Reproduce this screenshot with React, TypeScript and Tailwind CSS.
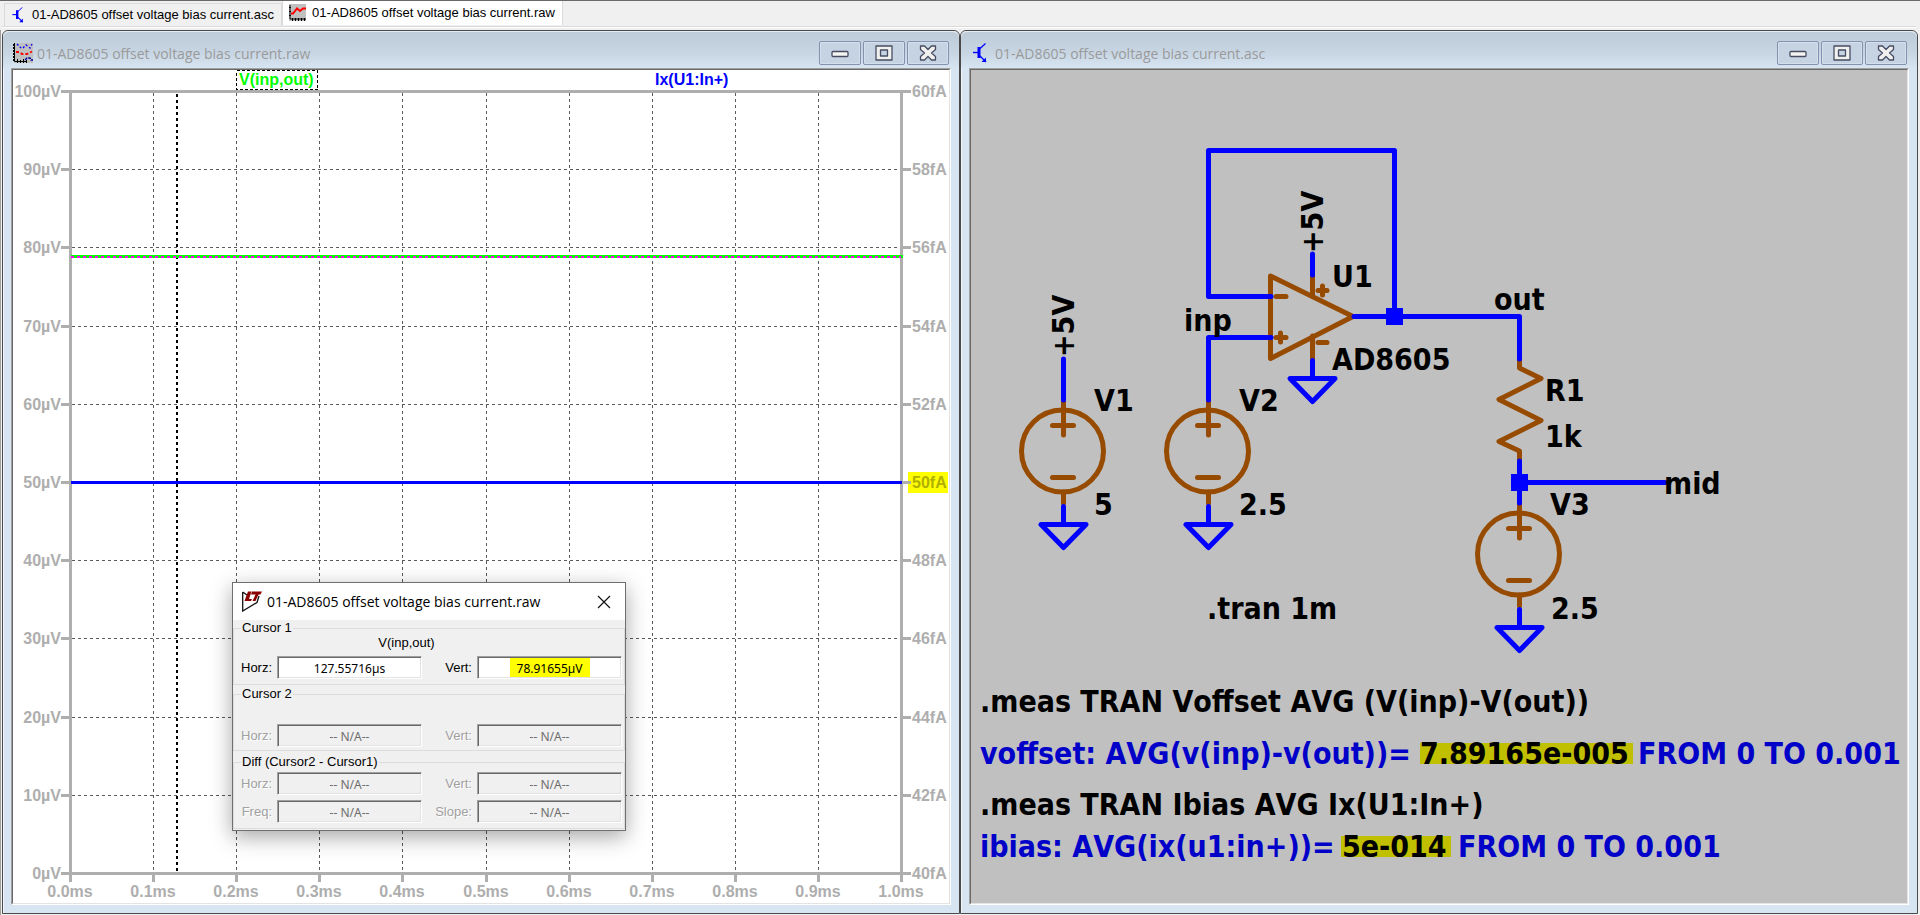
import type { ReactNode } from "react";

const AXIS = "#aeaeae";
const WIRE = "#0000ff";
const PART = "#964b00";

const STEPS = [0, 1, 2, 3, 4, 5, 6, 7, 8, 9, 10];

/* ---------- icons ---------- */

function TransistorIcon({ className }: { className: string }) {
  return (
    <svg viewBox="0 0 14 20" className={className} aria-hidden="true">
      <g stroke="#0000ff" fill="none">
        <path d="M0 9.5H5" strokeWidth="1.4" />
        <path d="M6 4V15" strokeWidth="3" />
        <path d="M7 5.5L12.5 .5" strokeWidth="1.2" />
        <path d="M7 13L13 19" strokeWidth="1.4" />
      </g>
      <path d="M13 14.5V19H8.500Z" fill="#0000ff" />
    </svg>
  );
}

function PlotIcon({ className }: { className: string }) {
  return (
    <svg viewBox="0 0 17 17" className={className} aria-hidden="true">
      <path d="M0 0H17V17H0Z" fill="#c0c0c0" />
      <path d="M1 1V15H17" fill="none" stroke="#000" strokeWidth="1" />
      <path d="M0 3.500H2M0 7.500H2M0 11.500H2M3.500 14V17M6.500 14V17M9.500 14V17M12.500 14V17M15.500 14V17" stroke="#000" />
      <path d="M2 9.500H4L8 4.500L11 7L14 4.500H17" fill="none" stroke="#ff0000" strokeWidth="2" />
    </svg>
  );
}

function WaveIcon({ className }: { className: string }) {
  return (
    <svg viewBox="0 0 20 20" className={className} aria-hidden="true">
      <path d="M1 0H20V20H1Z" fill="#c0c0c0" />
      <path d="M1 1V19" fill="none" stroke="#000" strokeWidth="2" strokeDasharray="2 1" />
      <path d="M1.500 0V18.500H13" fill="none" stroke="#000" />
      <path d="M4.500 16V20M7.500 17V20M10.500 16V20M13.500 17V20" stroke="#000" />
      <path d="M4 1L8 5M10 5L13 2L17 5L19 1" fill="none" stroke="#0000ff" strokeWidth="1.4" strokeDasharray="2 2" />
      <path d="M3 9H6L9 11H14L19 8.500" fill="none" stroke="#ff0000" strokeWidth="1.800" strokeDasharray="3 2" />
      <path d="M12 17L14 15H17L18 17H20" fill="none" stroke="#0000a0" strokeWidth="1.400" strokeDasharray="3 1" />
    </svg>
  );
}

function AppLogo() {
  return (
    <svg viewBox="0 0 20 21" className="h-[21px] w-5 shrink-0" aria-hidden="true">
      <path d="M.7 1V20L15 11.500L17 5M.7 1L5 4" fill="none" stroke="#111" strokeWidth="1.300" />
      <path d="M6 .5H9.500L7 8H10L9 10H2.500Z" fill="#8b0000" />
      <path d="M10 .5H20L18.500 3.500H16.500L13.500 10H10.500L13.500 3.500H9Z" fill="#8b0000" />
    </svg>
  );
}

function MinimizeGlyph() {
  return (
    <svg viewBox="0 0 18 16" className="h-4 w-[18px]" aria-hidden="true">
      <rect x="1" y="6.500" width="16" height="5" rx="1" fill="#f4f4f2" stroke="#474c62" strokeWidth="1.300" />
    </svg>
  );
}

function MaximizeGlyph() {
  return (
    <svg viewBox="0 0 18 16" className="h-4 w-[18px]" aria-hidden="true">
      <path
        d="M1 1H17V15H1ZM5.500 5V11H12.500V5Z"
        fill="#f0f0ee"
        fillRule="evenodd"
        stroke="#474c62"
        strokeWidth="1.300"
        strokeLinejoin="round"
      />
    </svg>
  );
}

function CloseGlyph() {
  return (
    <svg viewBox="0 0 18 16" className="h-4 w-[18px]" aria-hidden="true">
      <path
        d="M1.500 1H5.500L9 4.500L12.500 1H16.500V4.500L12.500 8L16.500 11.500V15H12.500L9 11.500L5.500 15H1.500V11.500L5.500 8L1.500 4.500Z"
        fill="#f0f0ee"
        stroke="#474c62"
        strokeWidth="1.300"
        strokeLinejoin="round"
      />
    </svg>
  );
}

/* ---------- window chrome ---------- */

function CaptionButton({ label, children }: { label: string; children: ReactNode }) {
  return (
    <button
      type="button"
      aria-label={label}
      className="flex h-6 w-[42px] items-center justify-center rounded-[2px] border border-[#8492b0] bg-[#c6d3e3] shadow-[inset_0_0_0_1px_#d5dfeb]"
    >
      {children}
    </button>
  );
}

function MdiWindow({ title, icon, children }: { title: string; icon: ReactNode; children: ReactNode }) {
  return (
    <section className="flex min-w-0 flex-col rounded-t-md border border-[#4a4a4a] bg-[#d7e4f2] px-2 pb-2 shadow-[inset_1px_1px_0_#eef4fa]">
      <header className="-mx-2 flex h-[37px] shrink-0 items-center rounded-t-md bg-linear-to-b from-[#bfcddb] from-10% via-[#c8d6e4] via-60% to-[#d7e4f2] pt-[7px] pr-[10px] pl-[10px] shadow-[inset_0_1px_0_#e6edf5]">
        <span className="flex w-6 shrink-0 items-center">{icon}</span>
        <h2 className="min-w-0 flex-1 truncate font-['Open_Sans','Noto_Sans',sans-serif] text-[14px] text-[#9a9a9a] [font-kerning:none]">
          {title}
        </h2>
        <div className="flex shrink-0 gap-[2px]">
          <CaptionButton label="Minimize">
            <MinimizeGlyph />
          </CaptionButton>
          <CaptionButton label="Maximize">
            <MaximizeGlyph />
          </CaptionButton>
          <CaptionButton label="Close">
            <CloseGlyph />
          </CaptionButton>
        </div>
      </header>
      <div className="flex min-h-0 flex-1 border border-t-[#a0a0a0] border-r-white border-b-white border-l-[#a0a0a0]">
        <div className="relative min-h-0 min-w-0 flex-1 border border-t-[#696969] border-r-[#e3e3e3] border-b-[#e3e3e3] border-l-[#696969]">
          {children}
        </div>
      </div>
    </section>
  );
}

/* ---------- waveform plot ---------- */

function WaveformPlot() {
  const left = 57;
  const right = 888;
  const top = 21;
  const bottom = 803;
  const dx = (right - left) / 10;
  const dy = (bottom - top) / 10;

  return (
    <svg
      viewBox="0 0 936 833"
      preserveAspectRatio="xMinYMin meet"
      className="block h-full w-full bg-white font-['Liberation_Sans',Arial,sans-serif] text-[16px] font-bold [font-kerning:none]"
      role="img"
      aria-label="V(inp,out) and Ix(U1:In+) against time"
    >
      <rect x="895" y="402" width="40" height="21" fill="#ffff00" />

      <g stroke="#5a5a5a" strokeDasharray="3 3" shapeRendering="crispEdges">
        {STEPS.slice(1, 10).map((i) => (
          <path key={`v${i}`} d={`M${Math.round(left + i * dx)}.5 ${top + 2}V${bottom}`} />
        ))}
        {STEPS.slice(1, 10).map((i) => (
          <path key={`h${i}`} d={`M${left + 2} ${Math.round(top + i * dy)}.5H${right}`} />
        ))}
      </g>
      <path d="M164 24V802" stroke="#000" strokeWidth="2" strokeDasharray="3 3" shapeRendering="crispEdges" />

      <g stroke={AXIS} strokeWidth="3" fill="none" shapeRendering="crispEdges">
        <path d={`M${left + 0.5} ${top}V${bottom + 8}M${right + 0.5} ${top}V${bottom + 8}`} />
        {STEPS.map((i) => {
          const y = Math.round(top + i * dy) + 0.5;
          return <path key={i} d={`M48 ${y}H${left}M${right} ${y}H898`} />;
        })}
        {STEPS.map((i) => (
          <path key={i} d={`M${Math.round(left + i * dx) + 0.5} ${bottom}V${bottom + 9}`} />
        ))}
        <path d={`M${left} ${top + 0.5}H${right}M${left} ${bottom + 0.5}H${right}`} />
      </g>

      <g fill={AXIS}>
        {STEPS.map((i) => {
          const y = Math.round(top + i * dy) + 6;
          return (
            <g key={i}>
              <text x="48" y={y} textAnchor="end">{`${100 - 10 * i}µV`}</text>
              <text x="899" y={y} fill={i === 5 ? "#b0b000" : AXIS}>{`${60 - 2 * i}fA`}</text>
            </g>
          );
        })}
        {STEPS.map((i) => (
          <text key={i} x={Math.round(left + i * dx)} y="827" textAnchor="middle">
            {`${(i / 10).toFixed(1)}ms`}
          </text>
        ))}
      </g>

      <g shapeRendering="crispEdges">
        <path d="M58 186.500H890" stroke="#00ff00" strokeWidth="3" />
        <path d="M58 187H888" stroke="#ff00ff" strokeWidth="2" strokeDasharray="3 3" />
        <path d="M58 412.500H889" stroke="#0000ff" strokeWidth="3" />
      </g>

      <rect x="223.500" y=".5" width="81" height="19" fill="none" stroke="#000" strokeDasharray="3 2" shapeRendering="crispEdges" />
      <text x="226" y="15" fill="#00ff00">
        V(inp,out)
      </text>
      <text x="642" y="15" fill="#0000ff">
        Ix(U1:In+)
      </text>
    </svg>
  );
}

/* ---------- cursor readout dialog ---------- */

function Reading({ id, label, value, marked }: { id: string; label: string; value?: string; marked?: boolean }) {
  const live = value !== undefined;
  return (
    <>
      <label
        htmlFor={id}
        className={
          live
            ? "text-right whitespace-nowrap text-black"
            : "text-right whitespace-nowrap text-[#a0a0a0] [text-shadow:1px_1px_0_#fff]"
        }
      >
        {label}
      </label>
      <input
        id={id}
        readOnly
        disabled={!live}
        value={value ?? "-- N/A--"}
        className={`h-[23px] w-full min-w-0 border border-t-[#a0a0a0] border-r-white border-b-white border-l-[#a0a0a0] pt-px text-center font-['Noto_Sans',sans-serif] text-[12px] shadow-[inset_1px_1px_0_#696969,inset_-1px_-1px_0_#e3e3e3] ${
          live ? "bg-white text-black" : "bg-[#f0f0f0] text-[#6d6d6d]"
        } ${marked ? "bg-[linear-gradient(#ff0,#ff0)] bg-[length:80px_100%] bg-center bg-no-repeat" : ""}`}
      />
    </>
  );
}

function Group({ title, className, children }: { title: string; className: string; children: ReactNode }) {
  return (
    <fieldset className={`min-w-0 border border-[#dcdcdc] pr-[2px] pl-[7px] ${className}`}>
      <legend className="h-4 px-px leading-4">{title}</legend>
      {children}
    </fieldset>
  );
}

function CursorDialog() {
  const row = "grid grid-cols-[31px_1fr_45px_1fr] items-center gap-x-[5px] gap-y-[5px]";
  return (
    <div
      role="dialog"
      aria-label="01-AD8605 offset voltage bias current.raw"
      className="absolute top-[512px] left-[219px] w-[394px] border border-[#6f6f6f] bg-[#f0f0f0] pb-px font-['Liberation_Sans',Arial,sans-serif] text-[13px] text-black shadow-[0_6px_20px_rgba(0,0,0,0.35)]"
    >
      <header className="flex h-[37px] items-center bg-white pr-[13px] pl-[9px]">
        <AppLogo />
        <h3 className="flex-1 pl-[5px] font-['Open_Sans','Noto_Sans',sans-serif] text-[14px] whitespace-nowrap [font-kerning:none]">
          01-AD8605 offset voltage bias current.raw
        </h3>
        <button type="button" aria-label="Close dialog" className="flex size-4 items-center justify-center">
          <svg viewBox="0 0 14 14" className="size-[14px]" aria-hidden="true">
            <path d="M1 1L13 13M13 1L1 13" stroke="#111" strokeWidth="1.200" />
          </svg>
        </button>
      </header>
      <Group title="Cursor 1" className="pb-[5px]">
        <p className="h-4 pr-[50px] text-center leading-[14px]">V(inp,out)</p>
        <div className={`${row} pt-1`}>
          <Reading id="c1-horz" label="Horz:" value="127.55716µs" />
          <Reading id="c1-vert" label="Vert:" value="78.91655µV" marked />
        </div>
      </Group>
      <Group title="Cursor 2" className="mt-px pt-[22px] pb-[3px]">
        <div className={row}>
          <Reading id="c2-horz" label="Horz:" />
          <Reading id="c2-vert" label="Vert:" />
        </div>
      </Group>
      <Group title="Diff (Cursor2 - Cursor1)" className="mt-[3px] pt-[2px] pb-[5px]">
        <div className={row}>
          <Reading id="d-horz" label="Horz:" />
          <Reading id="d-vert" label="Vert:" />
          <Reading id="d-freq" label="Freq:" />
          <Reading id="d-slope" label="Slope:" />
        </div>
      </Group>
    </div>
  );
}

/* ---------- schematic ---------- */

function Ground({ x, y }: { x: number; y: number }) {
  return <path d={`M${x} ${y - 18}V${y}M${x - 22.5} ${y}H${x + 22.5}L${x} ${y + 23}Z`} stroke={WIRE} />;
}

function VoltageSource({ x, y }: { x: number; y: number }) {
  return (
    <g>
      <g stroke={PART}>
        <circle cx={x - 1} cy={y} r="41" />
        <path
          d={`M${x} ${y - 49}V${y - 16}M${x - 11} ${y - 25.5}H${x + 10}M${x - 11} ${y + 26.5}H${x + 10}M${x} ${y + 41}V${y + 52}`}
        />
      </g>
      <Ground x={x} y={y + 73.5} />
    </g>
  );
}

function Schematic() {
  return (
    <svg
      viewBox="971 70 936 833"
      preserveAspectRatio="xMinYMin meet"
      className="block h-full w-full bg-[#c0c0c0] font-['DejaVu_Sans_Condensed','DejaVu_Sans',sans-serif] text-[30px] font-bold [font-kerning:none]"
      role="img"
      aria-label="AD8605 follower schematic"
    >
      <g fill="none" strokeWidth="5" strokeLinecap="round" strokeLinejoin="round">
        <VoltageSource x={1063.5} y={451} />
        <VoltageSource x={1208.5} y={451} />
        <VoltageSource x={1519.5} y={554} />
        <path d="M1312.500 336V358" stroke={PART} />
        <Ground x={1312.5} y={378.5} />
        <g stroke={PART}>
          <path d="M1270.500 276L1353 316.500L1270.500 358.500Z" />
          <path d="M1276 296.500H1286M1276 337.500H1286M1280.500 333V342" />
          <path d="M1312.500 276V296M1318 290.500H1327M1322.500 286V295M1318 342.500H1327" />
          <path d="M1519.500 359V368L1541 378.500L1499 399.500L1541 420.500L1499 441.500L1519.500 451V460" />
        </g>
        <g stroke={WIRE}>
          <path d="M1271 296.500H1208.500V150.500H1394.500V316" />
          <path d="M1271 337.500H1208.500V400" />
          <path d="M1063.500 359V400M1312.500 254V275" />
          <path d="M1354 316.500H1519.500V359M1519.500 461V503M1519 482.500H1665" />
        </g>
      </g>
      <g fill={WIRE}>
        <rect x="1386" y="308" width="17" height="17" />
        <rect x="1511" y="474" width="17" height="17" />
      </g>

      <g>
        <text transform="translate(1074 357) rotate(-90)">+5V</text>
        <text transform="translate(1323 253) rotate(-90)">+5V</text>
        <text x="1332" y="287">U1</text>
        <text x="1332" y="370">AD8605</text>
        <text x="1184" y="331">inp</text>
        <text x="1094" y="411">V1</text>
        <text x="1094" y="515">5</text>
        <text x="1239" y="411">V2</text>
        <text x="1239" y="515">2.5</text>
        <text x="1494" y="310">out</text>
        <text x="1545" y="401">R1</text>
        <text x="1545" y="447">1k</text>
        <text x="1664" y="494">mid</text>
        <text x="1550" y="515">V3</text>
        <text x="1551" y="619">2.5</text>
        <text x="1207" y="619">.tran 1m</text>
        <text x="980" y="712">.meas TRAN Voffset AVG (V(inp)-V(out))</text>
        <text x="980" y="815">.meas TRAN Ibias AVG Ix(U1:In+)</text>
      </g>

      <g fill="#c0c000">
        <rect x="1420" y="743" width="213" height="21" />
        <rect x="1341" y="836" width="110" height="21" />
      </g>
      <g fill="#0000c8">
        <text x="980" y="764">voffset: AVG(v(inp)-v(out))=</text>
        <text x="1420" y="764" fill="#000">
          7.89165e-005
        </text>
        <text x="1638" y="764">FROM 0 TO 0.001</text>
        <text x="980" y="857">ibias: AVG(ix(u1:in+))=</text>
        <text x="1342" y="857" fill="#000">
          5e-014
        </text>
        <text x="1458" y="857">FROM 0 TO 0.001</text>
      </g>
    </svg>
  );
}

/* ---------- page ---------- */

export default function App() {
  return (
    <div className="flex h-screen flex-col bg-[#f0f0f0] font-['Liberation_Sans',Arial,sans-serif]">
      <nav
        aria-label="Open documents"
        className="flex h-[26px] shrink-0 items-end border-t border-[#696969] pl-1 text-[13px] text-black [font-kerning:none]"
      >
        <button
          type="button"
          className="flex h-[23px] items-center gap-2 border border-b-0 border-[#dadada] pr-[7px] pb-px pl-[7px] whitespace-nowrap"
        >
          <TransistorIcon className="h-4 w-3" />
          01-AD8605 offset voltage bias current.asc
        </button>
        <button
          type="button"
          className="flex h-6 items-center gap-[6px] self-start border border-t-0 border-b-0 border-[#dadada] bg-white pr-[7px] pb-px pl-[6px] whitespace-nowrap"
        >
          <PlotIcon className="size-[17px]" />
          01-AD8605 offset voltage bias current.raw
        </button>
      </nav>
      <div className="mr-1 ml-[2px] h-1 shrink-0 border-t border-[#dadada] bg-white shadow-[inset_0_-2px_0_#f0f0f0]" />
      <main className="grid min-h-0 flex-1 grid-cols-2 border-l border-[#a0a0a0] pr-[2px] pb-px pl-px">
        <MdiWindow
          title="01-AD8605 offset voltage bias current.raw"
          icon={<WaveIcon className="size-5" />}
        >
          <WaveformPlot />
          <CursorDialog />
        </MdiWindow>
        <MdiWindow
          title="01-AD8605 offset voltage bias current.asc"
          icon={<TransistorIcon className="ml-[2px] h-5 w-[14px]" />}
        >
          <Schematic />
        </MdiWindow>
      </main>
    </div>
  );
}
